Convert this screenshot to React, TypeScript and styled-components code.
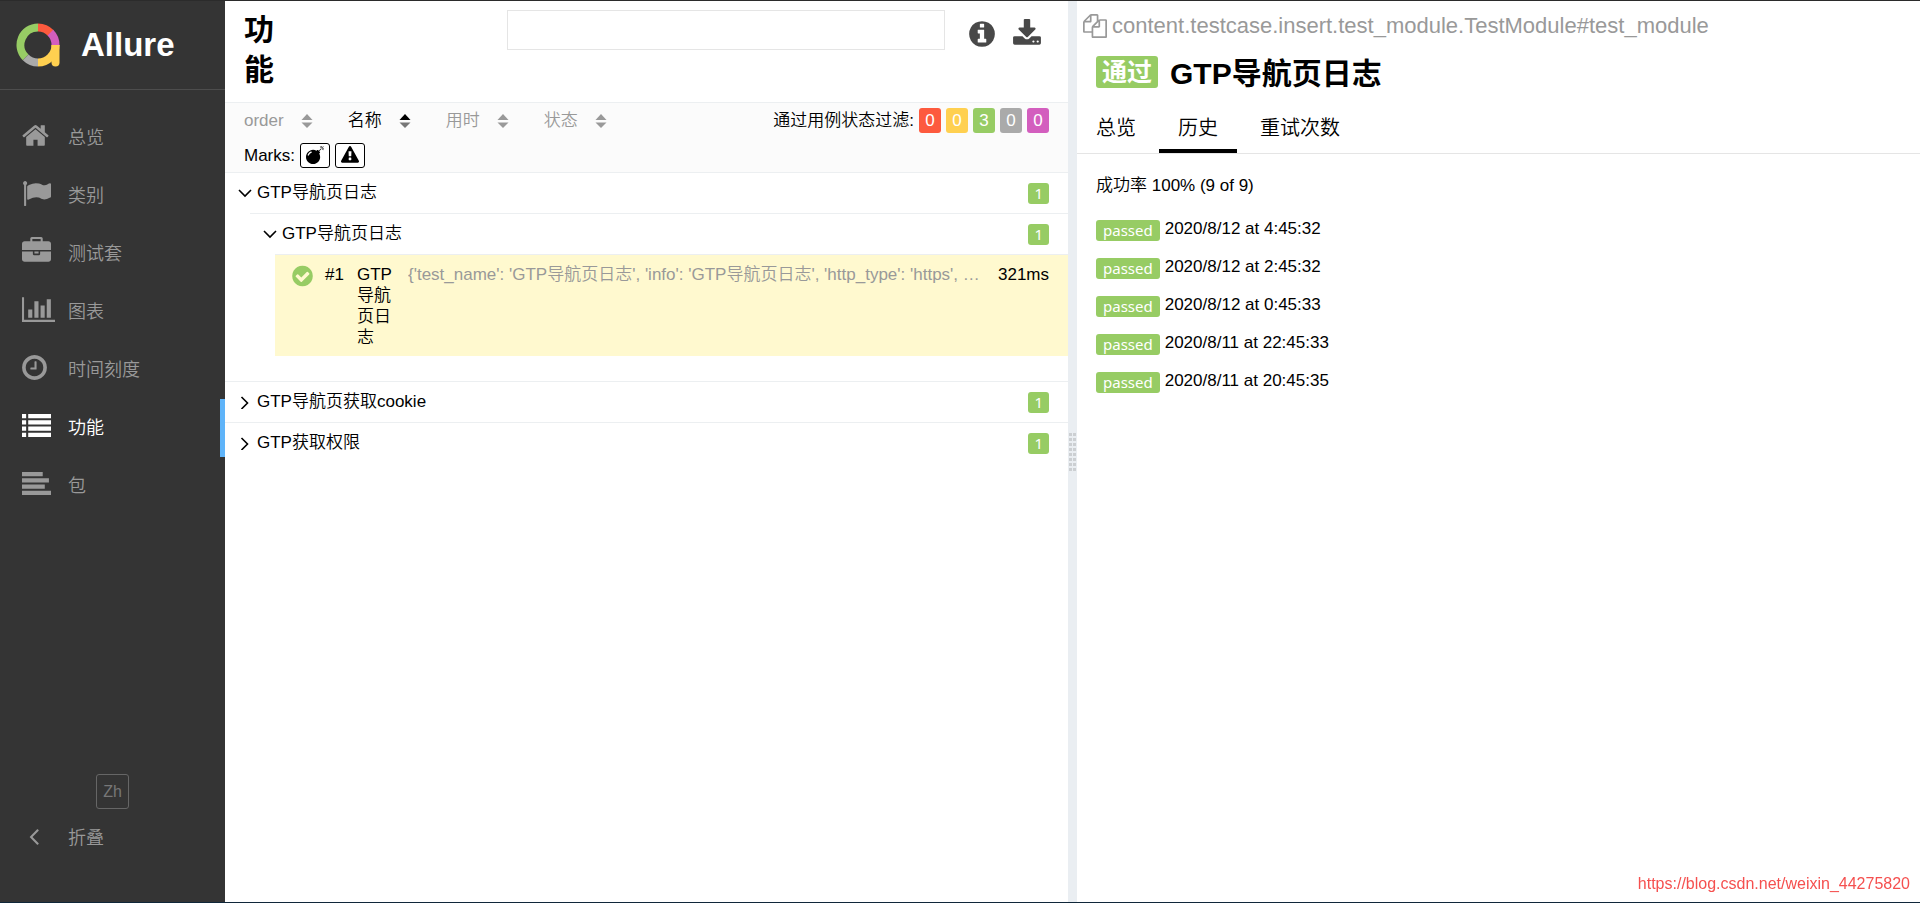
import React from 'react';
import styled, { createGlobalStyle, css } from 'styled-components';

const GlobalStyle = createGlobalStyle`
  *, *::before, *::after { box-sizing: border-box; }
  body {
    margin: 0;
    background: #fff;
    color: #000;
    font-family: "Liberation Sans", "Noto Sans CJK SC", sans-serif;
    font-size: 17px;
    font-weight: 350;
    line-height: 21px;
  }
  h1, h2, p, ul { margin: 0; padding: 0; }
  ul { list-style: none; }
  a { color: inherit; text-decoration: none; }
  button, input { font: inherit; color: inherit; }
  button { margin: 0; padding: 0; border: 0; background: none; cursor: pointer; }
`;

const colors = {
  failed: '#fd5a3e',
  broken: '#ffd050',
  passed: '#97cc64',
  skipped: '#aaaaaa',
  unknown: '#d35ebe',
  border: '#eceff1',
  muted: '#999999',
};

type Glyph = { x: number; width: number; d: string };

const DISC =
  'M1664 896q0 209-103 385.5t-279.5 279.5-385.5 103-385.5-103-279.5-279.5-103-385.5 103-385.5 279.5-279.5 385.5-103 385.5 103 279.5 279.5 103 385.5z';

const glyphs: Record<string, Glyph> = {
  home: {
    x: 64,
    width: 1664,
    d: 'M1472 992v480q0 26-19 45t-45 19h-384v-384h-256v384h-384q-26 0-45-19t-19-45v-480q0-1 .5-3t.5-3l575-474 575 474q1 2 1 6zm223-69l-62 74q-8 9-21 11h-3q-13 0-21-7l-692-577-692 577q-12 8-24 7-13-2-21-11l-62-74q-8-10-7-23.5t11-21.5l719-599q32-26 76-26t76 26l244 204v-195q0-14 9-23t23-9h192q14 0 23 9t9 23v408l219 182q10 8 11 21.5t-7 23.5z',
  },
  flag: {
    x: 0,
    width: 1792,
    d: 'M320 256q0 72-64 110v1266q0 13-9.5 22.5t-22.5 9.5h-64q-13 0-22.5-9.5t-9.5-22.5v-1266q-64-38-64-110 0-53 37.5-90.5t90.5-37.5 90.5 37.5 37.5 90.5zm1472 64v763q0 25-12.5 38.5t-39.5 27.5q-215 116-369 116-61 0-123.5-22t-108.5-48-115.5-48-142.5-22q-192 0-464 146-17 9-33 9-26 0-45-19t-19-45v-742q0-32 31-55 21-14 79-43 236-120 421-120 107 0 200 29t219 88q38 19 88 19 54 0 117.5-21t110-47 88-47 54.5-21q26 0 45 19t19 45z',
  },
  briefcase: {
    x: 0,
    width: 1792,
    d: 'M640 256h512v-128h-512v128zm1152 640v480q0 66-47 113t-113 47h-1472q-66 0-113-47t-47-113v-480h672v160q0 26 19 45t45 19h320q26 0 45-19t19-45v-160h672zm-768 0v128h-256v-128h256zm768-480v384h-1792v-384q0-66 47-113t113-47h352v-160q0-40 28-68t68-28h576q40 0 68 28t28 68v160h352q66 0 113 47t47 113z',
  },
  chart: {
    x: 0,
    width: 2048,
    d: 'M640 896v512h-256v-512h256zm384-512v1024h-256v-1024h256zm1024 1152v128h-2048v-1536h128v1408h1920zm-640-896v768h-256v-768h256zm384-384v1152h-256v-1152h256z',
  },
  clock: {
    x: 128,
    width: 1536,
    d: 'M1024 544v448q0 14-9 23t-23 9h-320q-14 0-23-9t-9-23v-64q0-14 9-23t23-9h224v-352q0-14 9-23t23-9h64q14 0 23 9t9 23zm416 352q0-148-73-273t-198-198-273-73-273 73-198 198-73 273 73 273 198 198 273 73 273-73 198-198 73-273zm224 0q0 209-103 385.5t-279.5 279.5-385.5 103-385.5-103-279.5-279.5-103-385.5 103-385.5 279.5-279.5 385.5-103 385.5 103 279.5 279.5 103 385.5z',
  },
  list: {
    x: 0,
    width: 1792,
    d: 'M0 192h256v256h-256zM384 192h1408v256h-1408zM0 576h256v256h-256zM384 576h1408v256h-1408zM0 960h256v256h-256zM384 960h1408v256h-1408zM0 1344h256v256h-256zM384 1344h1408v256h-1408z',
  },
  align: {
    x: 0,
    width: 1792,
    d: 'M0 192h1280v256h-1280zM0 576h1664v256h-1664zM0 960h1408v256h-1408zM0 1344h1792v256h-1792z',
  },
  angleLeft: {
    x: 128,
    width: 1536,
    d: 'M1203 544q0 13-10 23l-393 393 393 393q10 10 10 23t-10 23l-50 50q-10 10-23 10t-23-10l-466-466q-10-10-10-23t10-23l466-466q10-10 23-10t23 10l50 50q10 10 10 23z',
  },
  info: {
    x: 128,
    width: 1536,
    d: 'M1152 1376v-160q0-14-9-23t-23-9h-96v-512q0-14-9-23t-23-9h-320q-14 0-23 9t-9 23v160q0 14 9 23t23 9h96v320h-96q-14 0-23 9t-9 23v160q0 14 9 23t23 9h448q14 0 23-9t9-23zm-128-896v-160q0-14-9-23t-23-9h-192q-14 0-23 9t-9 23v160q0 14 9 23t23 9h192q14 0 23-9t9-23z' + DISC,
  },
  download: {
    x: 64,
    width: 1664,
    d: 'M1344 1344q0-26-19-45t-45-19-45 19-19 45 19 45 45 19 45-19 19-45zm256 0q0-26-19-45t-45-19-45 19-19 45 19 45 45 19 45-19 19-45zm128-224v320q0 40-28 68t-68 28h-1472q-40 0-68-28t-28-68v-320q0-40 28-68t68-28h465l135 136q58 56 136 56t136-56l136-136h464q40 0 68 28t28 68zm-325-569q17 41-14 70l-448 448q-18 19-45 19t-45-19l-448-448q-31-29-14-70 17-39 59-39h256v-448q0-26 19-45t45-19h256q26 0 45 19t19 45v448h256q42 0 59 39z',
  },
  bomb: {
    x: 0,
    width: 1792,
    d: 'M571 589q-10-25-34-35t-49 0q-108 44-191 127t-127 191q-10 25 0 49t35 34q13 5 24 5 42 0 60-40 34-84 98.5-148.5t148.5-98.5q25-11 35-35t0-49zm942-356l46 46-244 243 68 68q19 19 19 45.5t-19 45.5l-64 64q89 161 89 343 0 143-55.5 273.5t-150 225-225 150-273.5 55.5-273.5-55.5-225-150-150-225-55.5-273.5 55.5-273.5 150-225 225-150 273.5-55.5q182 0 343 89l64-64q19-19 45.5-19t45.5 19l68 68zm8-56q-10 10-22 10-13 0-23-10l-91-90q-9-10-9-23t9-23q10-9 23-9t23 9l90 91q10 9 10 22.5t-10 22.5zm230 230q-11 9-23 9t-23-9l-90-91q-10-9-10-22.5t10-22.5q9-10 22.5-10t22.5 10l91 90q9 10 9 23t-9 23zm41-183q0 14-9 23t-23 9h-96q-14 0-23-9t-9-23 9-23 23-9h96q14 0 23 9t9 23zm-192-192v96q0 14-9 23t-23 9-23-9-9-23v-96q0-14 9-23t23-9 23 9 9 23zm151 55l-91 90q-10 10-22 10-13 0-23-10-10-9-10-22.5t10-22.5l90-91q10-9 23-9t23 9q9 10 9 23t-9 23z',
  },
  warning: {
    x: 0,
    width: 1792,
    d: 'M1024 1375v-190q0-14-9.5-23.5t-22.5-9.5h-192q-13 0-22.5 9.5t-9.5 23.5v190q0 14 9.5 23.5t22.5 9.5h192q13 0 22.5-9.5t9.5-23.5zm-2-374l18-459q0-12-10-19-13-11-24-11h-220q-11 0-24 11-10 7-10 21l17 457q0 10 10 16.5t24 6.5h185q14 0 23.5-6.5t10.5-16.5zm-14-934l768 1408q35 63-2 126-17 29-46.5 46t-63.5 17h-1536q-34 0-63.5-17t-46.5-46q-37-63-2-126l768-1408q17-31 47-49t65-18 65 18 47 49z',
  },
  check: {
    x: 128,
    width: 1536,
    d: 'M1412 734q0-28-18-46l-91-90q-19-19-45-19t-45 19l-408 407-226-226q-19-19-45-19t-45 19l-91 90q-18 18-18 46 0 27 18 45l362 362q19 19 45 19 27 0 46-19l543-543q18-18 18-45z' + DISC,
  },
  files: {
    x: 0,
    width: 1792,
    d: 'M1696 384q40 0 68 28t28 68v1216q0 40-28 68t-68 28h-960q-40 0-68-28t-28-68v-288h-544q-40 0-68-28t-28-68v-672q0-40 20-88t48-76l408-408q28-28 76-48t88-20h416q40 0 68 28t28 68v328q68-40 128-40h416zm-544 213l-299 299h299v-299zm-640-384l-299 299h299v-299zm196 647l316-316v-416h-384v416q0 40-28 68t-68 28h-416v640h512v-256q0-40 20-88t48-76zm956 804v-1152h-384v416q0 40-28 68t-68 28h-416v640h896z',
  },
};

const Svg = styled.svg`
  display: block;
  flex: none;
  fill: currentColor;
`;

const Icon = ({ name, size }: { name: string; size: number }) => {
  const g = glyphs[name];
  return (
    <Svg
      width={Math.round((g.width / 1792) * size)}
      height={size}
      viewBox={`${g.x} 0 ${g.width} 1792`}
      fillRule="evenodd"
      aria-hidden="true"
    >
      <path d={g.d} />
    </Svg>
  );
};

const Page = styled.div`
  display: flex;
  min-height: 100vh;
  border-top: 1px solid #2b2b2b;
  border-bottom: 1px solid #10273a;
`;

/* ---------- side navigation ---------- */

const Sidebar = styled.aside`
  display: flex;
  flex-direction: column;
  flex: none;
  width: 225px;
  background: #343434;
  color: ${colors.muted};
  font-size: 18px;
`;

const Brand = styled.a`
  display: flex;
  align-items: center;
  gap: 20px;
  height: 89px;
  padding: 0 16px;
  border-bottom: 1px solid #4d4d4d;
  color: #fff;
  font-size: 33px;
  font-weight: 700;
  line-height: 40px;
`;

const Menu = styled.ul`
  padding-top: 19px;
`;

const sideRow = css`
  display: flex;
  align-items: center;
  width: 100%;
  height: 58px;
  padding-left: 22px;
`;

const MenuLink = styled.a<{ $active?: boolean }>`
  ${sideRow}
  border-right: 5px solid ${p => (p.$active ? '#5fb4f9' : 'transparent')};
  color: ${p => (p.$active ? '#fff' : 'inherit')};
`;

const MenuIcon = styled.span`
  width: 46px;
  padding-bottom: 5px;
`;

const SideFooter = styled.div`
  display: flex;
  flex-direction: column;
  align-items: center;
  margin-top: auto;
  padding-bottom: 35px;
`;

const LanguageButton = styled.button`
  width: 33px;
  height: 35px;
  border: 1px solid #666;
  border-radius: 3px;
  color: #777;
  font-size: 16px;
`;

const CollapseButton = styled.button`
  ${sideRow}
`;

/* ---------- tree pane ---------- */

const Pane = styled.section`
  flex: 1 1 0;
  min-width: 0;
`;

const PaneHeader = styled.header`
  display: grid;
  grid-template-columns: 3fr 5fr auto;
  align-items: start;
  padding: 9px 27px 12px 19px;
  border-bottom: 1px solid ${colors.border};
`;

const PaneTitle = styled.h1`
  width: min-content;
  font-size: 30px;
  line-height: 40px;
`;

const SearchBox = styled.input`
  width: 100%;
  height: 40px;
  padding: 0 10px;
  border: 1px solid #e5e5e5;
  outline: 0;
`;

const HeaderActions = styled.div`
  display: flex;
  align-items: center;
  gap: 18px;
  padding: 9px 0 0 24px;
  color: #484848;
`;

const Toolbar = styled.div`
  padding: 0 19px;
  border-bottom: 1px solid ${colors.border};
  background: #fbfbfb;
`;

const ToolbarLine = styled.div`
  display: flex;
  align-items: center;
  gap: 5px;
  height: 35px;

  & + & { height: 34px; }
`;

const Sorters = styled.div`
  display: flex;
  gap: 35px;
  margin-right: auto;
`;

const Sorter = styled.button<{ $active?: boolean }>`
  display: flex;
  align-items: center;
  gap: 17px;
  color: ${p => (p.$active ? '#000' : colors.muted)};
`;

const StatusFilter = styled.button<{ $color: string }>`
  width: 22px;
  height: 25px;
  border-radius: 3px;
  background: ${p => p.$color};
  color: #fff;
`;

const MarkButton = styled.button`
  display: flex;
  align-items: center;
  justify-content: center;
  width: 30px;
  height: 25px;
  border: 1px solid #000;
  border-radius: 3px;
  background: #fff;
`;

const Group = styled.li`
  & + & { border-top: 1px solid ${colors.border}; }
`;

const GroupButton = styled.button`
  display: flex;
  align-items: center;
  width: 100%;
  height: 40px;
  padding: 0 19px 0 13px;
  text-align: left;
`;

const GroupArrow = styled.span`
  width: 19px;
`;

const GroupName = styled.span`
  flex: 1;
  padding-bottom: 2px;
`;

const Nested = styled.ul`
  margin-left: 25px;
  border-top: 1px solid ${colors.border};
`;

const RootGroup = styled(Group)`
  &:first-child { padding-bottom: 25px; }
`;

const Label = styled.span`
  display: inline-block;
  height: 21px;
  padding: 0 6px;
  border-radius: 3px;
  background: ${colors.passed};
  color: #fff;
  font-family: "Noto Sans", sans-serif;
  font-size: 15px;
  font-weight: 400;
  line-height: 21px;
`;

const TestCase = styled.a`
  display: flex;
  align-items: flex-start;
  height: 101px;
  padding: 9px 19px 0 17px;
  background: #fff9cf;
`;

const StatusMark = styled.span`
  width: 33px;
  color: ${colors.passed};
`;

const CaseOrder = styled.span`
  width: 32px;
`;

const CaseName = styled.span`
  width: 36px;
  margin-right: 15px;
`;

const CaseParams = styled.span`
  flex: 1;
  min-width: 0;
  overflow: hidden;
  color: ${colors.muted};
  text-overflow: ellipsis;
  white-space: nowrap;
`;

const Splitter = styled.div`
  display: flex;
  align-items: center;
  justify-content: center;
  flex: none;
  width: 9px;
  background: #eaeef2;
`;

/* ---------- test result pane ---------- */

const FullName = styled.div`
  display: flex;
  align-items: center;
  gap: 5px;
  padding: 9px 6px 0;
  color: ${colors.muted};
  font-size: 22px;
  line-height: 32px;
`;

const ResultTitle = styled.h2`
  display: flex;
  align-items: center;
  gap: 12px;
  padding: 12px 19px 0;
  font-size: 30px;
  line-height: 40px;
`;

const ResultStatus = styled.span`
  height: 32px;
  margin-bottom: 4px;
  padding: 0 6px;
  border-radius: 3px;
  background: ${colors.passed};
  color: #fff;
  font-size: 25px;
  line-height: 32px;
`;

const Tabs = styled.nav`
  display: flex;
  gap: 4px;
  margin-top: 10px;
  border-bottom: 1px solid #e5e5e5;
`;

const Tab = styled.a<{ $active?: boolean }>`
  height: 49px;
  padding: 0 19px;
  border-bottom: 4px solid ${p => (p.$active ? '#000' : 'transparent')};
  font-size: 20px;
  line-height: 49px;
`;

const History = styled.div`
  padding: 13px 19px;
  line-height: 38px;
`;

const Runs = styled.ul`
  margin-top: 5px;
`;

const HistoryLink = styled.a`
  display: flex;
  align-items: center;
  gap: 5px;
  height: 38px;
`;

const HistoryLabel = styled(Label)`
  margin-top: 3px;
  padding: 0 7px;
`;

const Watermark = styled.a`
  position: fixed;
  right: 10px;
  bottom: 9px;
  color: #f5504f;
  font-size: 16px;
  line-height: 20px;
`;

const Logo = () => {
  const arc = (from: number, to: number, color: string) => {
    const pt = (a: number) => {
      const r = (a * Math.PI) / 180;
      return `${22 + 17.5 * Math.sin(r)} ${22 - 17.5 * Math.cos(r)}`;
    };
    return (
      <path
        d={`M${pt(from)}A17.5 17.5 0 ${to - from > 180 ? 1 : 0} 1 ${pt(to)}`}
        stroke={color}
        strokeWidth="8"
        fill="none"
      />
    );
  };
  return (
    <Svg width="45" height="45" viewBox="0 0 45 45" aria-hidden="true">
      {arc(225, 360, colors.passed)}
      {arc(0, 47, colors.failed)}
      {arc(45, 91, colors.unknown)}
      {arc(180, 225, colors.skipped)}
      {arc(90, 180, colors.broken)}
      <path d="M35.500 22H43.500V39.500A4 4 0 0 1 35.500 39.500z" fill={colors.broken} />
    </Svg>
  );
};

const SortArrows = ({ up }: { up?: boolean }) => (
  <Svg width="12" height="14" viewBox="0 0 12 14" aria-hidden="true">
    <path d="M6 0L11.500 6H.5z" />
    <path d="M6 14L11.500 8.500H.5z" fill={up ? '#777' : undefined} />
  </Svg>
);

const Chevron = ({ open }: { open?: boolean }) => (
  <Svg width="14" height="14" viewBox="0 0 14 14" aria-hidden="true">
    <path
      d={open ? 'M1 4L7 10L13 4' : 'M3.500 2L9.500 8L3.500 14'}
      fill="none"
      stroke="currentColor"
      strokeWidth="1.600"
    />
  </Svg>
);

const Grip = () => (
  <Svg width="7" height="38" viewBox="0 0 7 38" aria-hidden="true">
    {[0, 5, 10, 15, 20, 25, 30, 35].map(y => (
      <path key={y} d={`M0 ${y}h3v3h-3zM4 ${y}h3v3h-3z`} fill="#cccfd2" />
    ))}
  </Svg>
);

const menu = [
  { icon: 'home', text: '总览' },
  { icon: 'flag', text: '类别' },
  { icon: 'briefcase', text: '测试套' },
  { icon: 'chart', text: '图表' },
  { icon: 'clock', text: '时间刻度' },
  { icon: 'list', text: '功能', active: true },
  { icon: 'align', text: '包' },
];

const sorters = [
  { text: 'order' },
  { text: '名称', active: true },
  { text: '用时' },
  { text: '状态' },
];

const filters = [
  { status: 'failed', color: colors.failed, count: 0 },
  { status: 'broken', color: colors.broken, count: 0 },
  { status: 'passed', color: colors.passed, count: 3 },
  { status: 'skipped', color: colors.skipped, count: 0 },
  { status: 'unknown', color: colors.unknown, count: 0 },
];

const runs = [
  '2020/8/12 at 4:45:32',
  '2020/8/12 at 2:45:32',
  '2020/8/12 at 0:45:33',
  '2020/8/11 at 22:45:33',
  '2020/8/11 at 20:45:35',
];

const GroupRow = ({ name, open }: { name: string; open?: boolean }) => (
  <GroupButton type="button" aria-expanded={!!open}>
    <GroupArrow>
      <Chevron open={open} />
    </GroupArrow>
    <GroupName>{name}</GroupName>
    <Label>1</Label>
  </GroupButton>
);

export default function App() {
  return (
    <>
      <GlobalStyle />
      <Page>
        <Sidebar>
          <Brand href="#">
            <Logo />
            Allure
          </Brand>
          <nav>
            <Menu>
              {menu.map(m => (
                <li key={m.text}>
                  <MenuLink href="#" $active={m.active}>
                    <MenuIcon>
                      <Icon name={m.icon} size={29} />
                    </MenuIcon>
                    {m.text}
                  </MenuLink>
                </li>
              ))}
            </Menu>
          </nav>
          <SideFooter>
            <LanguageButton type="button">Zh</LanguageButton>
            <CollapseButton type="button">
              <MenuIcon>
                <Icon name="angleLeft" size={28} />
              </MenuIcon>
              折叠
            </CollapseButton>
          </SideFooter>
        </Sidebar>

        <Pane>
          <PaneHeader>
            <PaneTitle>功能</PaneTitle>
            <SearchBox type="text" aria-label="搜索" />
            <HeaderActions>
              <button type="button" aria-label="信息">
                <Icon name="info" size={30} />
              </button>
              <button type="button" aria-label="下载">
                <Icon name="download" size={30} />
              </button>
            </HeaderActions>
          </PaneHeader>
          <Toolbar>
            <ToolbarLine>
              <Sorters>
                {sorters.map(s => (
                  <Sorter key={s.text} type="button" $active={s.active}>
                    {s.text}
                    <SortArrows up={s.active} />
                  </Sorter>
                ))}
              </Sorters>
              <span>通过用例状态过滤:</span>
              {filters.map(f => (
                <StatusFilter key={f.status} type="button" $color={f.color} aria-label={`${f.status} ${f.count}`}>
                  {f.count}
                </StatusFilter>
              ))}
            </ToolbarLine>
            <ToolbarLine>
              <span>Marks:</span>
              <MarkButton type="button" aria-label="newFailed">
                <Icon name="bomb" size={18} />
              </MarkButton>
              <MarkButton type="button" aria-label="flaky">
                <Icon name="warning" size={18} />
              </MarkButton>
            </ToolbarLine>
          </Toolbar>
          <ul>
            <RootGroup>
              <GroupRow name="GTP导航页日志" open />
              <Nested>
                <Group>
                  <GroupRow name="GTP导航页日志" open />
                  <Nested>
                    <li>
                      <TestCase href="#">
                        <StatusMark>
                          <Icon name="check" size={24} />
                        </StatusMark>
                        <CaseOrder>#1</CaseOrder>
                        <CaseName>GTP导航页日志</CaseName>
                        <CaseParams>
                          {"{'test_name': 'GTP导航页日志', 'info': 'GTP导航页日志', 'http_type': 'https', …"}
                        </CaseParams>
                        <span>321ms</span>
                      </TestCase>
                    </li>
                  </Nested>
                </Group>
              </Nested>
            </RootGroup>
            <RootGroup>
              <GroupRow name="GTP导航页获取cookie" />
            </RootGroup>
            <RootGroup>
              <GroupRow name="GTP获取权限" />
            </RootGroup>
          </ul>
        </Pane>

        <Splitter>
          <Grip />
        </Splitter>

        <Pane>
          <FullName>
            <Icon name="files" size={24} />
            content.testcase.insert.test_module.TestModule#test_module
          </FullName>
          <ResultTitle>
            <ResultStatus>通过</ResultStatus>
            GTP导航页日志
          </ResultTitle>
          <Tabs>
            <Tab href="#">总览</Tab>
            <Tab href="#" $active>
              历史
            </Tab>
            <Tab href="#">重试次数</Tab>
          </Tabs>
          <History>
            <p>成功率 100% (9 of 9)</p>
            <Runs>
              {runs.map(r => (
                <li key={r}>
                  <HistoryLink href="#">
                    <HistoryLabel>passed</HistoryLabel>
                    {r}
                  </HistoryLink>
                </li>
              ))}
            </Runs>
          </History>
        </Pane>
      </Page>
      <Watermark href="https://blog.csdn.net/weixin_44275820">https://blog.csdn.net/weixin_44275820</Watermark>
    </>
  );
}
